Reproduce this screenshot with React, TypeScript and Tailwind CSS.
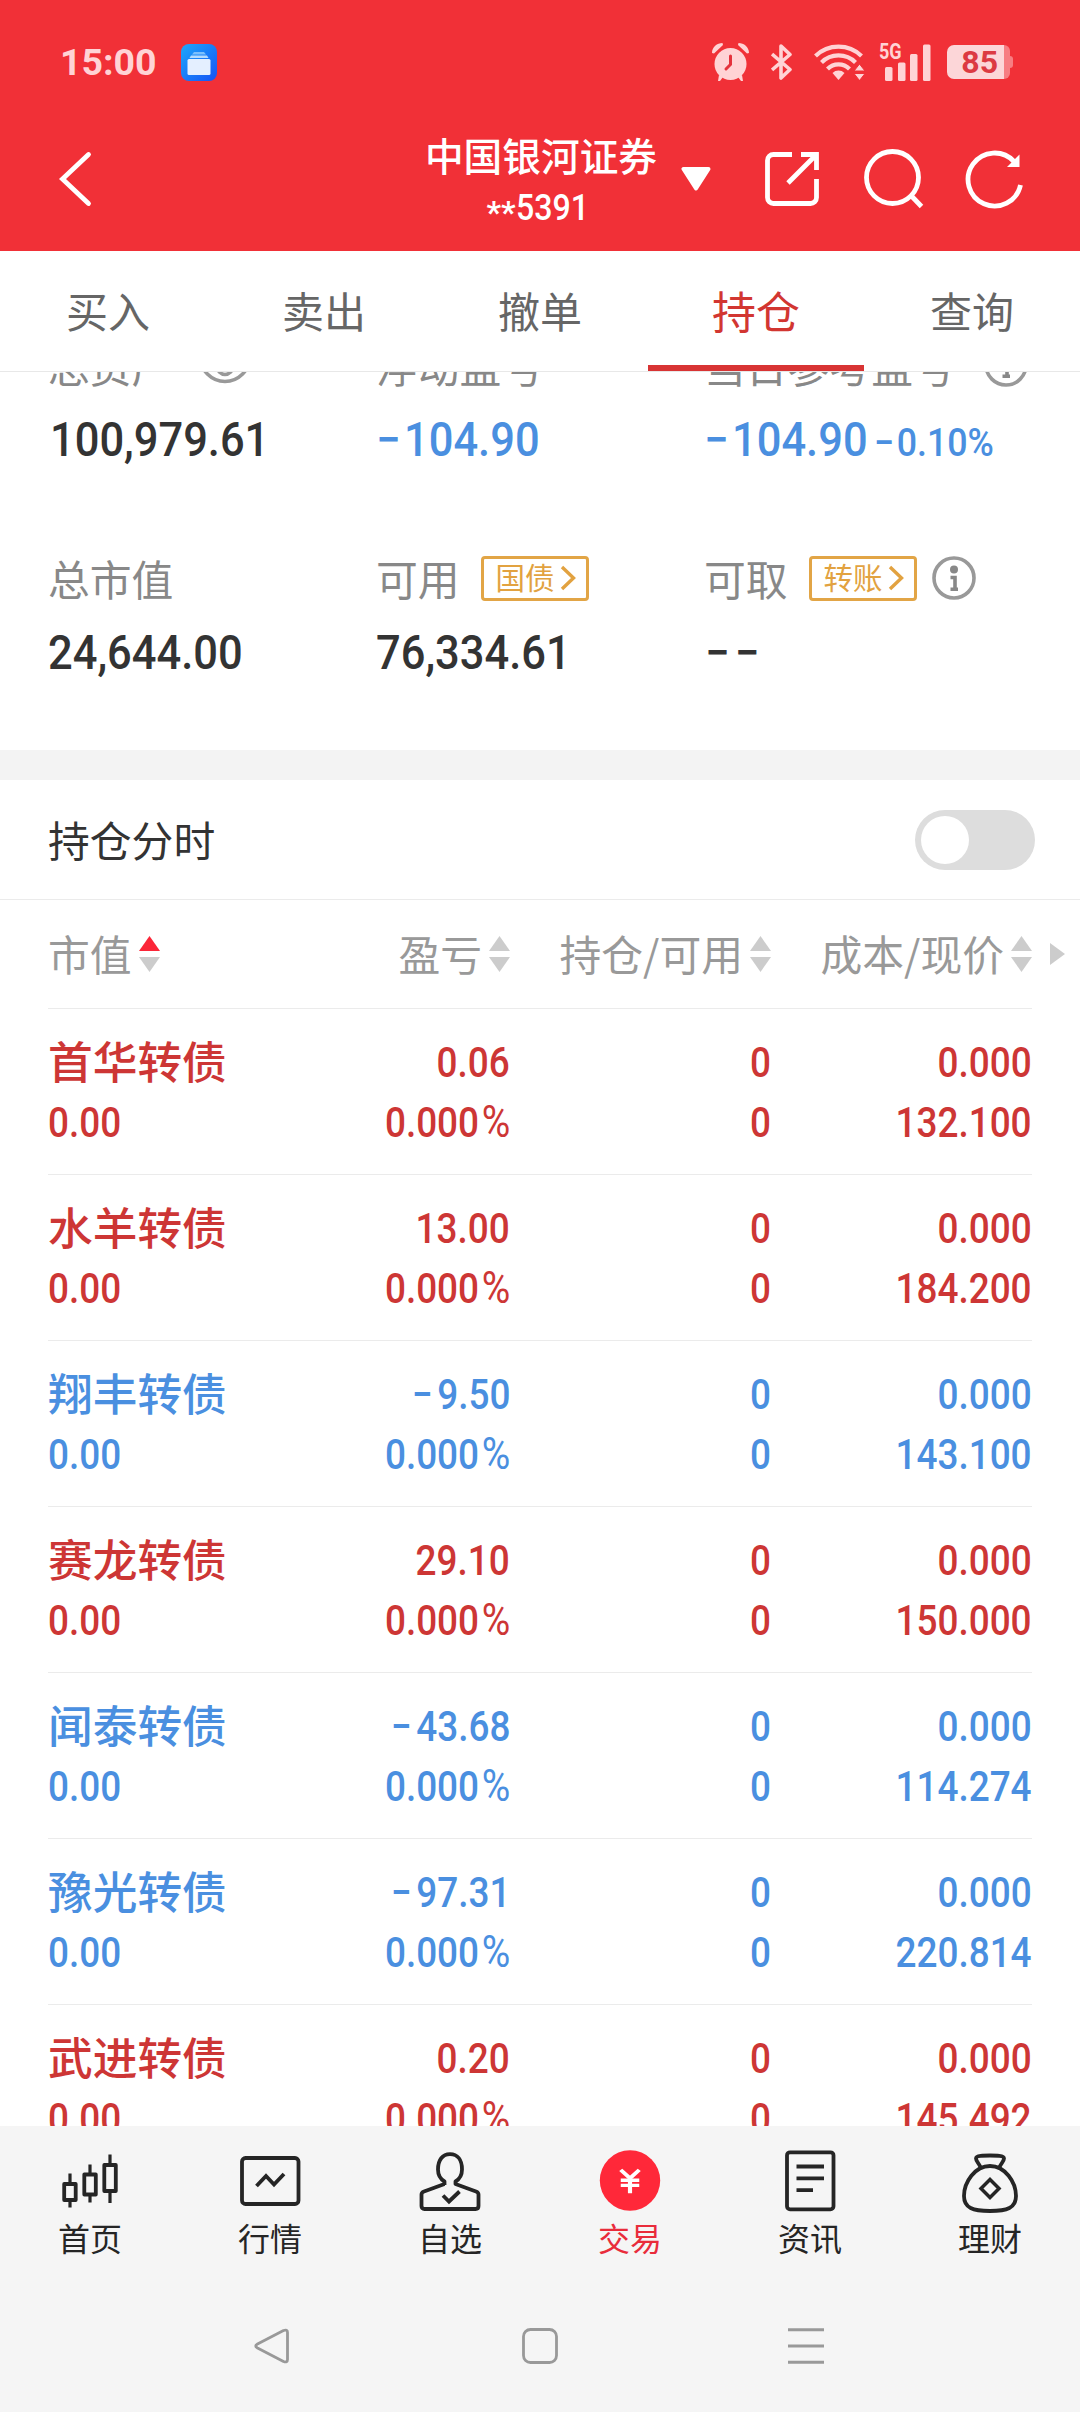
import { ReactNode } from "react";
import { JapaneseYen } from "lucide-react";

type Holding = {
  name: string;
  value: string;
  profit: string;
  rate: string;
  amount: string;
  usable: string;
  cost: string;
  price: string;
  up: boolean;
};

const holdings: Holding[] = [
  { name: "首华转债", value: "0.00", profit: "0.06", rate: "0.000%", amount: "0", usable: "0", cost: "0.000", price: "132.100", up: true },
  { name: "水羊转债", value: "0.00", profit: "13.00", rate: "0.000%", amount: "0", usable: "0", cost: "0.000", price: "184.200", up: true },
  { name: "翔丰转债", value: "0.00", profit: "−9.50", rate: "0.000%", amount: "0", usable: "0", cost: "0.000", price: "143.100", up: false },
  { name: "赛龙转债", value: "0.00", profit: "29.10", rate: "0.000%", amount: "0", usable: "0", cost: "0.000", price: "150.000", up: true },
  { name: "闻泰转债", value: "0.00", profit: "−43.68", rate: "0.000%", amount: "0", usable: "0", cost: "0.000", price: "114.274", up: false },
  { name: "豫光转债", value: "0.00", profit: "−97.31", rate: "0.000%", amount: "0", usable: "0", cost: "0.000", price: "220.814", up: false },
  { name: "武进转债", value: "0.00", profit: "0.20", rate: "0.000%", amount: "0", usable: "0", cost: "0.000", price: "145.492", up: true },
];

const tabs = ["买入", "卖出", "撤单", "持仓", "查询"];

// big narrow number of the account summary
const Total = ({ children, className = "text-[#333]" }: { children: ReactNode; className?: string }) => (
  <div
    className={`mt-7 w-max origin-left scale-x-[0.905] whitespace-nowrap font-['Roboto',sans-serif] text-[48px] font-medium leading-[50px] ${className}`}
  >
    {children}
  </div>
);

// narrow number of a table cell, signs get a little more room
const Cell = ({ children, right }: { children: string; right?: boolean }) => {
  const minus = children.startsWith("−");
  const percent = children.endsWith("%");
  return (
    <div className={`font-['Roboto',sans-serif] ${right ? "text-right" : ""}`}>
      <span className={`inline-block scale-x-[0.875] whitespace-nowrap font-medium ${right ? "origin-right" : "origin-left"}`}>
        {minus && <span className="mr-[5px]">−</span>}
        {children.replace("−", "").replace("%", "")}
        {percent && <span className="ml-[3px] text-[44.500px] font-normal leading-none">%</span>}
      </span>
    </div>
  );
};

const StatusBar = () => (
  <div className="flex h-[124px] items-center pl-[60px] pr-[67px] text-[#ffd3d5]">
    <span className="w-[121px] font-['Roboto',sans-serif] text-[37.500px] font-bold leading-[38px]">15:00</span>
    <svg className="h-[37px] w-9" viewBox="0 0 36 37">
      <defs>
        <linearGradient id="app" x1="0" y1="0" x2="1" y2="1">
          <stop offset="0" stopColor="#1ea7fb" />
          <stop offset="1" stopColor="#1552f5" />
        </linearGradient>
      </defs>
      <rect width="36" height="37" rx="8" fill="url(#app)" />
      <path d="M13 8h10l2 2.500H11z" fill="#7cc0fd" />
      <path d="M10 11.500h16l1.500 2.500h-19z" fill="#b5dbfe" />
      <rect x="6.500" y="15" width="23" height="16" rx="1.500" fill="#e4efff" />
    </svg>
    <div className="ml-auto flex items-center">
      <svg className="h-[38px] w-[37px]" viewBox="0 0 37 38">
        <g fill="currentColor">
          <circle cx="18.500" cy="21" r="16" />
          <path d="M0 10C0 4 5 0 10.500 0L11 2 2 10.500zM37 10C37 4 32 0 26.500 0L26 2 35 10.500z" />
          <path d="M7 32l4 2-3 4H6zM30 32l-4 2 3 4h2z" />
        </g>
        <path d="M18.500 13v8.500L14 26" fill="none" stroke="#e5323c" strokeWidth="3" strokeLinecap="round" />
      </svg>
      <svg className="ml-[22px] h-9 w-[21px]" viewBox="0 0 21 36" fill="none" stroke="currentColor" strokeWidth="3.600" strokeLinejoin="round">
        <path d="M1 10l18 15.500-9 8.500V2l9 8.500L1 26" />
      </svg>
      <svg className="ml-[22px] h-9 w-[51px]" viewBox="0 0 51 36" fill="none" stroke="currentColor" strokeWidth="4.200">
        <path d="M1.500 12a33 33 0 0 1 46 0M7.500 18.500a24 24 0 0 1 34 0M13.500 25a15.500 15.500 0 0 1 22 0" />
        <path d="M24.500 36l-6-7a8.500 8.500 0 0 1 12 0z" fill="currentColor" stroke="none" />
        <path d="M40 27l5.500-7 5.500 7zM40 29.500l5.500 7 5.500-7z" fill="currentColor" stroke="#f13037" strokeWidth="1" />
      </svg>
      <div className="relative ml-[14px] h-[38px] w-[52px]">
        <span className="absolute -top-[2px] left-0 origin-left scale-x-[0.820] font-['Roboto',sans-serif] text-[22px] font-bold leading-[22px]">
          5G
        </span>
        <svg className="h-[38px] w-[52px]" viewBox="0 0 52 38" fill="currentColor">
          <rect x="6" y="24" width="7.500" height="14" rx="1.500" />
          <rect x="19" y="19.500" width="7.500" height="18.500" rx="1.500" />
          <rect x="31" y="11" width="7.500" height="27" rx="1.500" />
          <rect x="44" y="1.500" width="7.500" height="36.500" rx="1.500" />
        </svg>
      </div>
      <div className="ml-4 flex h-[34px] w-[57px] items-center justify-end rounded-l-[7px] bg-[#fcd6d8] pr-[6px] font-['Roboto',sans-serif] text-[32px] font-bold leading-[34px] text-[#dc3a42]">
        85
      </div>
      <div className="h-[34px] w-[6px] rounded-r-[6px] bg-[#f77d82]"></div>
      <div className="h-3 w-[3px] rounded-r-sm bg-[#f77d82]"></div>
    </div>
  </div>
);

const TitleBar = () => (
  <div className="flex h-[127px] items-start pl-[58px] pr-[54px] pt-[3px] text-white">
    <svg className="mt-[23px] h-[58px] w-[34px] shrink-0" viewBox="0 0 34 58" fill="none" stroke="currentColor" strokeWidth="4.800" strokeLinecap="round">
      <path d="M30.500 4.500L4.500 29l26 24.500" strokeLinejoin="miter" />
    </svg>
    <div className="ml-[329px] flex w-[240px] shrink-0 flex-col items-center">
      <div className="mt-[1px] h-[52px] whitespace-nowrap font-['Noto_Sans_CJK_SC',sans-serif] text-[38.700px] font-medium leading-[52px]">
        中国银河证券
      </div>
      <div className="mt-[7px] flex h-[42px] w-[109px] items-center font-['Roboto',sans-serif] text-[36.500px] font-medium leading-[42px]">
        <span className="w-[19px] translate-y-[4px] text-[32px] font-bold">*</span>
        <span className="w-[19px] translate-y-[4px] text-[32px] font-bold">*</span>
        <span className="origin-left scale-x-[0.880]">5391</span>
      </div>
    </div>
    <svg className="ml-[20px] mt-[40px] h-6 w-[30px] shrink-0" viewBox="0 0 30 24">
      <path d="M2.500 2h25L15 21.500z" fill="currentColor" stroke="currentColor" strokeWidth="4" strokeLinejoin="round" />
    </svg>
    <svg className="ml-[54px] mt-[25px] h-[54px] w-[54px] shrink-0" viewBox="0 0 54 54" fill="none" stroke="currentColor" strokeWidth="4.800">
      <path d="M27 2.500H8.500a6 6 0 0 0-6 6V45.500a6 6 0 0 0 6 6H45.500a6 6 0 0 0 6-6V27" />
      <path d="M36 2.500H51.500V18M51.500 2.500L23 31" />
    </svg>
    <svg className="ml-[45px] mt-[22px] h-[60px] w-[60px] shrink-0" viewBox="0 0 60 60" fill="none" stroke="currentColor" strokeWidth="4.800">
      <circle cx="28.500" cy="28.500" r="26" />
      <path d="M47 46.500L57.500 57.500" />
    </svg>
    <svg className="ml-[42px] mt-[23px] h-[58px] w-[58px] shrink-0 overflow-visible" viewBox="-1 0 58 58" fill="none" stroke="currentColor" strokeWidth="4.800">
      <path d="M47 11.500A26.500 26.500 0 1 0 53.500 35" />
      <path d="M52.500 4.500v12.500H40z" fill="currentColor" stroke="none" />
    </svg>
  </div>
);

const InfoIcon = ({ className = "" }: { className?: string }) => (
  <svg className={`h-11 w-11 shrink-0 ${className}`} viewBox="0 0 44 44" fill="none" stroke="#999" strokeWidth="3.600">
    <circle cx="22" cy="22" r="20" />
    <circle cx="22" cy="13.500" r="4" fill="#888" stroke="none" />
    <path d="M18.500 21.500h4.500V33M18.500 33.200h7.500" stroke="#888" />
  </svg>
);

const Label = ({ children }: { children: ReactNode }) => (
  <div className="-mt-[1px] mb-[1px] flex h-11 items-center whitespace-nowrap font-['Noto_Sans_CJK_SC',sans-serif] text-[41.800px] leading-[44px] text-[#888]">
    {children}
  </div>
);

const Badge = ({ children }: { children: ReactNode }) => (
  <span className="ml-[21px] flex h-[45px] w-[108px] items-center rounded-[4px] border-[3px] border-[#e2a546] pl-[12px] text-[29.500px] leading-[39px] text-[#e2a240]">
    <span className="-mt-[3px]">{children}</span>
    <svg className="ml-[5px] h-[26px] w-4" viewBox="0 0 16 26" fill="none" stroke="currentColor" strokeWidth="3.400">
      <path d="M2 2l11.500 11L2 24" />
    </svg>
  </span>
);

const Summary = () => (
  <div className="h-[378px] overflow-hidden px-12">
    <div className="-mt-7 grid grid-cols-3">
      <div className="h-[213px]">
        <Label>
          <span>总资产</span>
          <svg className="ml-[25px] h-[46px] w-[54px] shrink-0" viewBox="0 0 54 46" fill="none" stroke="#999" strokeWidth="3.600">
            <circle cx="27" cy="15" r="24.500" />
            <circle cx="27" cy="25" r="7.500" />
          </svg>
        </Label>
        <Total className="ml-[2px] text-[#333]">100,979.61</Total>
      </div>
      <div className="h-[213px]">
        <Label>浮动盈亏</Label>
        <Total className="text-[#4a8fe0]">
          <span className="mr-[4px]">−</span>104.90
        </Total>
      </div>
      <div className="h-[213px] whitespace-nowrap">
        <Label>
          <span>当日参考盈亏</span>
          <InfoIcon className="ml-[29px]" />
        </Label>
        <Total className="text-[#4a8fe0]">
          <span className="mr-[4px]">−</span>104.90<span className="ml-[7px] text-[39.500px] leading-none"><span className="mr-[3px]">−</span>0.10%</span>
        </Total>
      </div>
      <div>
        <Label>总市值</Label>
        <Total>24,644.00</Total>
      </div>
      <div>
        <Label>
          可用<Badge>国债</Badge>
        </Label>
        <Total>76,334.61</Total>
      </div>
      <div>
        <Label>
          可取<Badge>转账</Badge>
          <InfoIcon className="ml-[15px]" />
        </Label>
        <Total className="ml-[1px] tracking-[6px] text-[#333]">−−</Total>
      </div>
    </div>
  </div>
);

const Sort = ({ children, active, right }: { children: string; active?: boolean; right?: boolean }) => (
  <div className={`flex items-center whitespace-nowrap ${right ? "justify-end" : ""}`}>
    <span className="-mt-[2px]">{children}</span>
    <svg className="ml-[7px] h-9 w-[21px]" viewBox="0 0 21 36" fill="#ccc">
      <path d="M10.500 0L21 15H0z" fill={active ? "#fb2638" : "#ccc"} />
      <path d="M10.500 36L21 21H0z" />
    </svg>
  </div>
);

const Holdings = () => (
  <div className="h-[1226px] overflow-hidden">
    <div className="flex h-[108px] items-center font-['Noto_Sans_CJK_SC',sans-serif] text-[41.800px] leading-[44px] text-[#999]">
      <div className="ml-12 grid grid-cols-[222px_240px_261px_261px]">
        <Sort active>市值</Sort>
        <Sort right>盈亏</Sort>
        <Sort right>持仓/可用</Sort>
        <Sort right>成本/现价</Sort>
      </div>
      <svg className="ml-[18px] h-[22px] w-[15px]" viewBox="0 0 15 22">
        <path d="M0 0l15 11L0 22z" fill="#ccc" />
      </svg>
    </div>
    <div className="mx-12 border-t border-[#ebebeb]">
      {holdings.map((item) => (
        <div
          key={item.name}
          className={`grid h-[166px] grid-cols-[222px_240px_260.500px_261.500px] grid-rows-[60px_60px] border-b border-[#ebebeb] pt-[24px] text-[42.200px] leading-[60px] ${
            item.up ? "text-[#cd3635]" : "text-[#4a8fe0]"
          }`}
        >
          <div className="-mt-[3px] font-['Noto_Sans_CJK_SC',sans-serif] text-[44.700px] font-medium">{item.name}</div>
          <Cell right>{item.profit}</Cell>
          <Cell right>{item.amount}</Cell>
          <Cell right>{item.cost}</Cell>
          <Cell>{item.value}</Cell>
          <Cell right>{item.rate}</Cell>
          <Cell right>{item.usable}</Cell>
          <Cell right>{item.price}</Cell>
        </div>
      ))}
    </div>
  </div>
);

const NavItem = ({ label, active, children }: { label: string; active?: boolean; children: ReactNode }) => (
  <div className={`flex flex-col items-center ${active ? "text-[#e92c3b]" : "text-[#252525]"}`}>
    <svg
      className="h-[62px] w-[62px] overflow-visible"
      viewBox="0 0 62 62"
      fill="none"
      stroke="currentColor"
      strokeWidth="3.800"
      strokeLinejoin="round"
    >
      {children}
    </svg>
    <span className="mt-[6px] font-['Noto_Sans_CJK_SC',sans-serif] text-[32px] leading-[40px]">{label}</span>
  </div>
);

const BottomNav = () => (
  <div className="grid h-[164px] grid-cols-6 pt-[23px]">
    <NavItem label="首页">
      <path d="M5.200 35h11.500v16H5.200zM25.300 25.500h11.500v20H25.300zM45.300 16h11.500v26H45.300z" />
      <path d="M11 24.500V35M11 51v7.500M31 15.500v10M31 45.500v8M51 5.500V16M51 42v12" strokeWidth="3.200" />
    </NavItem>
    <NavItem label="行情">
      <rect x="3" y="9" width="56.500" height="46" rx="3.500" />
      <path d="M17.500 37L27 27l8 8.500L45 25" strokeLinejoin="miter" />
    </NavItem>
    <NavItem label="自选">
      <path d="M25.500 36v-3.500C20.500 29.500 19 25 19 20.500 19 11 23.500 5.200 31 5.200S43 11 43 20.500c0 4.500-1.500 9-6.500 12V35L57 42.500q2.500 1 2.500 3V57q0 3-3 3H5.500q-3 0-3-3V45.500q0-2 2.500-3L25.500 35" />
      <path d="M24 46.500l6 6L40.500 42.500" strokeLinejoin="miter" />
    </NavItem>
    <NavItem label="交易" active>
      <circle cx="31" cy="31.500" r="30.200" fill="#ff2839" stroke="none" />
      <JapaneseYen x="12.500" y="17" width="37" height="31" preserveAspectRatio="none" color="#fff" strokeWidth={2.700} strokeLinecap="butt" />
    </NavItem>
    <NavItem label="资讯">
      <rect x="8" y="3.300" width="46.500" height="57" rx="3" />
      <path d="M17.500 17.500h27.500M17.500 29.300h27.500M17.500 41.200h16.500" />
    </NavItem>
    <NavItem label="理财">
      <path d="M21.500 18C19.500 14 17 12 17 9.500 17 6.500 25 6.500 31 6.500s14 0 14 3c0 2.500-2.500 4.500-4.500 8.500" />
      <path d="M31 17C16 17 5 33 5 47c0 12 9 15 26 15s26-3 26-15C57 33 46 17 31 17z" />
      <path d="M31 30.500l9 9-9 9-9-9z" strokeWidth="3.500" strokeLinejoin="miter" />
    </NavItem>
  </div>
);

const SystemBar = () => (
  <div className="flex h-[122px] items-center pl-[254px] pr-[256px] text-[#999]">
    <div className="-mt-[10px] flex w-full items-center justify-between">
      <svg className="h-9 w-9" viewBox="0 0 36 36" fill="none" stroke="currentColor" strokeWidth="2.800" strokeLinejoin="round">
        <path d="M3.500 16L29.500 2.500Q33.500 1 33.500 4.500V31.500Q33.500 35 29.500 33.500L3.500 20Q0 18 3.500 16z" />
      </svg>
      <svg className="ml-[2px] h-9 w-9" viewBox="0 0 36 36" fill="none" stroke="currentColor" strokeWidth="2.800">
        <rect x="1.500" y="1.500" width="33" height="33" rx="7" />
      </svg>
      <svg className="h-9 w-9" viewBox="0 0 36 36" stroke="currentColor" strokeWidth="3">
        <path d="M0 1.700h36M0 18h36M0 34.300h36" />
      </svg>
    </div>
  </div>
);

export default function App() {
  return (
    <div className="flex h-[2412px] w-[1080px] flex-col overflow-hidden bg-white">
      <div className="h-[251px] bg-[#f13037]">
        <StatusBar />
        <TitleBar />
      </div>

      <div className="grid h-[121px] grid-cols-5 border-b border-[#e8e8e8] font-['Noto_Sans_CJK_SC',sans-serif]">
        {tabs.map((tab) => (
          <div
            key={tab}
            className={`flex h-[120px] items-center justify-center border-b-[6px] pt-[3px] leading-[44px] ${
              tab == "持仓" ? "border-[#d83434] text-[44px] text-[#d23631]" : "border-transparent text-[42px] text-[#666]"
            }`}
          >
            {tab}
          </div>
        ))}
      </div>

      <Summary />
      <div className="h-[30px] bg-[#f3f3f3]"></div>

      <div className="flex h-[120px] items-center justify-between border-b border-[#ebebeb] pl-12 pr-[45px]">
        <span className="-mt-[2px] font-['Noto_Sans_CJK_SC',sans-serif] text-[41.800px] leading-[44px] text-[#333]">持仓分时</span>
        <div className="flex h-[60px] w-[120px] items-center rounded-full bg-[#ddd] pl-[6px]">
          <div className="h-12 w-12 rounded-full bg-white"></div>
        </div>
      </div>

      <Holdings />

      <div className="bg-[#f5f5f5]">
        <BottomNav />
        <SystemBar />
      </div>
    </div>
  );
}
